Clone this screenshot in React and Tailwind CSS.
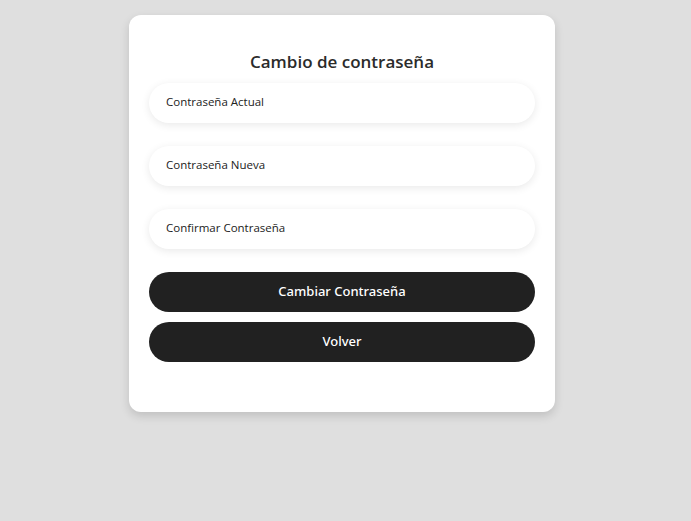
export default function App() {
  const fields = ['Contraseña Actual', 'Contraseña Nueva', 'Confirmar Contraseña']
  return (
    <div className="min-h-[521px] w-full bg-[#dfdfdf] flex justify-center pt-[15px] pr-[7px]" style={{ fontFamily: '"Open Sans", sans-serif' }}>
      <div className="w-[426px] h-[397px] bg-white rounded-[12px] shadow-[0_4px_10px_rgba(0,0,0,0.14)] px-5 pt-[35px]">
        <h2 className="text-center text-[17px] font-semibold text-[#2b2b2b] leading-[24px]">
          Cambio de contraseña
        </h2>

        <div className="mt-[9px] flex flex-col gap-[23px]">
          {fields.map((f) => (
            <input
              key={f}
              type="password"
              placeholder={f}
              className="w-full h-[40px] rounded-full bg-white px-[17px] pb-[4px] text-[11.5px] text-[#222] placeholder:text-[#222] shadow-[0_2px_8px_rgba(0,0,0,0.09)] outline-none"
            />
          ))}
        </div>

        <div className="mt-[23px] flex flex-col gap-[10px]">
          <button className="h-[40px] w-full rounded-full bg-[#212121] text-white text-[13px] font-medium" style={{ fontFamily: '"Noto Sans", sans-serif' }}>
            Cambiar Contraseña
          </button>
          <button className="h-[40px] w-full rounded-full bg-[#212121] text-white text-[13px] font-medium" style={{ fontFamily: '"Noto Sans", sans-serif' }}>
            Volver
          </button>
        </div>
      </div>
    </div>
  )
}
